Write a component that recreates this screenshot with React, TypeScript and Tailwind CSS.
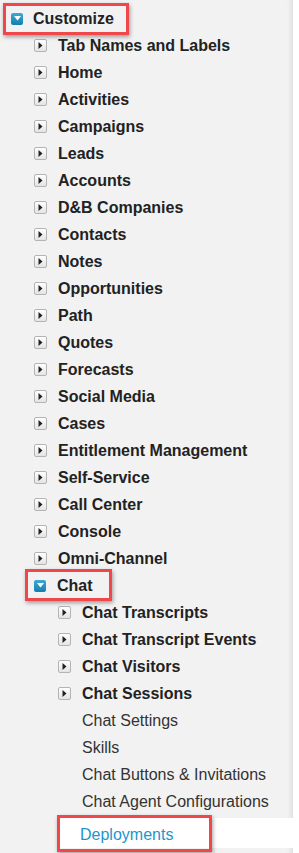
import React from "react";

const TOP_ITEMS = [
  "Tab Names and Labels",
  "Home",
  "Activities",
  "Campaigns",
  "Leads",
  "Accounts",
  "D&B Companies",
  "Contacts",
  "Notes",
  "Opportunities",
  "Path",
  "Quotes",
  "Forecasts",
  "Social Media",
  "Cases",
  "Entitlement Management",
  "Self-Service",
  "Call Center",
  "Console",
  "Omni-Channel",
];

const CHAT_FOLDERS = ["Chat Transcripts", "Chat Transcript Events", "Chat Visitors", "Chat Sessions"];
const CHAT_LINKS = ["Chat Settings", "Skills", "Chat Buttons & Invitations", "Chat Agent Configurations"];

function ExpandedIcon() {
  return (
    <span className="flex h-[12px] w-[12px] shrink-0 items-center justify-center rounded-[2px] bg-gradient-to-b from-[#3aaad6] to-[#127fad]">
      <svg width="7" height="5" viewBox="0 0 7 5">
        <path d="M0 0 H7 L3.5 4.5 Z" fill="#fff" />
      </svg>
    </span>
  );
}

function CollapsedIcon() {
  return (
    <span className="flex h-[13px] w-[13px] shrink-0 items-center justify-center rounded-[2px] border border-[#b4b4b4] bg-gradient-to-b from-white to-[#e4e4e4]">
      <svg width="5" height="7" viewBox="0 0 5 7">
        <path d="M0.5 0 V7 L4.5 3.5 Z" fill="#222" />
      </svg>
    </span>
  );
}

function RedBox({ className }: { className: string }) {
  return (
    <span
      className={`pointer-events-none absolute border-[3px] border-[#f0484a] shadow-[1px_2px_4px_rgba(0,0,0,0.35)] ${className}`}
    />
  );
}

function FolderRow({ label, indent }: { label: string; indent: string }) {
  return (
    <div className={`flex h-[27px] items-center ${indent}`}>
      <CollapsedIcon />
      <span className="ml-[11px] whitespace-nowrap text-[16px] font-bold text-[#222]">{label}</span>
    </div>
  );
}

export default function App() {
  return (
    <div
      className="relative h-[853px] w-[299px] overflow-hidden bg-white"
      style={{ fontFamily: '"Liberation Sans", Arial, sans-serif' }}
    >
      <div className="h-full w-[293px] border-r border-[#e0e0e0] bg-[#f2f2f2] pt-[5px] shadow-[inset_-5px_0_4px_-3px_rgba(0,0,0,0.06)]">
        <div className="relative flex h-[27px] items-center pl-[11px]">
          <ExpandedIcon />
          <span className="ml-[10px] text-[16px] font-bold text-[#222]">Customize</span>
          <RedBox className="left-[3px] top-[-2px] h-[32px] w-[126px]" />
        </div>

        {TOP_ITEMS.map((item) => (
          <FolderRow key={item} label={item} indent="pl-[34px]" />
        ))}

        <div className="relative flex h-[27px] items-center pl-[34px]">
          <ExpandedIcon />
          <span className="ml-[11px] text-[16px] font-bold text-[#222]">Chat</span>
          <RedBox className="left-[25px] top-[-3px] h-[32px] w-[87px]" />
        </div>

        {CHAT_FOLDERS.map((item) => (
          <FolderRow key={item} label={item} indent="pl-[58px]" />
        ))}

        {CHAT_LINKS.map((item) => (
          <div key={item} className="flex h-[27px] items-center pl-[82px]">
            <span className="whitespace-nowrap text-[16px] text-[#333]">{item}</span>
          </div>
        ))}

        <div className="relative ml-[57px] mt-[3px] flex h-[30px] w-[242px] items-center bg-white pl-[23px] pt-[3px]">
          <span className="text-[16px] text-[#1d95cc]">Deployments</span>
          <RedBox className="left-0 top-[-3px] h-[37px] w-[155px]" />
        </div>
      </div>
    </div>
  );
}
